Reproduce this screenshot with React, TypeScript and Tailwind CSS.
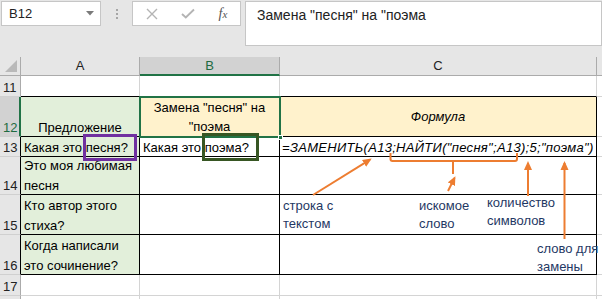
import React from "react";

const ORANGE = "#ed7d31";

function TopBar() {
  return (
    <div className="h-[57px] bg-[#e6e6e6] flex items-start pt-[1px]">
      <div className="ml-[1px] w-[101px] h-[25px] bg-white border border-[#c6c6c6] flex items-center justify-between pl-[7px] pr-[6px]">
        <span className="text-[13px] text-[#222]">B12</span>
        <svg width="8" height="5" viewBox="0 0 8 5">
          <path d="M0 0H8L4 4.5Z" fill="#7a7a7a" />
        </svg>
      </div>
      <div className="w-[31px] h-[25px] flex flex-col items-center justify-center gap-[2px]">
        <div className="w-[2px] h-[2px] bg-[#a6a6a6]" />
        <div className="w-[2px] h-[2px] bg-[#a6a6a6]" />
        <div className="w-[2px] h-[2px] bg-[#a6a6a6]" />
      </div>
      <div className="w-[109px] h-[25px] bg-white border border-[#c6c6c6] flex items-center">
        <div className="w-[37px] flex justify-center">
          <svg width="12" height="12" viewBox="0 0 12 12">
            <path d="M1 1L11 11M11 1L1 11" stroke="#b4b4b4" strokeWidth="1.4" />
          </svg>
        </div>
        <div className="w-[36px] flex justify-center">
          <svg width="14" height="11" viewBox="0 0 14 11">
            <path d="M1 6L4.8 9.5L13 1.5" stroke="#b4b4b4" strokeWidth="1.9" fill="none" />
          </svg>
        </div>
        <div className="w-[34px] flex justify-center">
          <span className="font-['Liberation_Serif',serif] italic text-[14px] text-[#555] leading-none">
            f<span className="text-[11px]">x</span>
          </span>
        </div>
      </div>
      <div className="ml-[4px] w-[360px] h-[45px] bg-white border border-[#c6c6c6] pl-[11px] pt-[4px] text-[14px] leading-[18px] text-[#222] whitespace-nowrap">
        Замена "песня" на "поэма
      </div>
    </div>
  );
}

function Sheet() {
  return (
    <div className="grid grid-cols-[21px_119px_140px_317px_5px] grid-rows-[19px_21px_40px_20px_38px_40px_40px_21px_3px]">
      {/* header row */}
      <div className="bg-[#e6e6e6] border-r border-b border-[#ababab] flex items-end justify-end pr-[3px] pb-[3px]">
        <svg width="12" height="12" viewBox="0 0 12 12">
          <path d="M12 0V12H0Z" fill="#b9b9b9" />
        </svg>
      </div>
      <div className="bg-[#e6e6e6] border-r border-b border-[#ababab] flex items-center justify-center text-[13px] text-[#222]">A</div>
      <div className="bg-[#d2d2d2] border-r border-[#ababab] border-b-2 border-b-[#217346] flex items-center justify-center text-[13px] text-[#1e6b41]">B</div>
      <div className="bg-[#e6e6e6] border-r border-b border-[#ababab] flex items-center justify-center text-[13px] text-[#222]">C</div>
      <div className="bg-[#e6e6e6] border-b border-[#ababab]" />

      {/* row 11 */}
      <div className="bg-[#e6e6e6] border-r border-b border-r-[#ababab] border-b-[#d0d0d0] flex items-end pl-[3px] text-[#222]">
        <span className="leading-[20px] mb-[-2px]">11</span>
      </div>
      <div className="bg-white border-r border-b border-r-[#d4d4d4] border-b-black" />
      <div className="bg-white border-r border-b border-r-[#d4d4d4] border-b-black" />
      <div className="bg-white border-r border-b border-r-[#d4d4d4] border-b-black" />
      <div className="bg-white border-b border-[#d4d4d4]" />

      {/* row 12 */}
      <div className="bg-[#d2d2d2] border-r-2 border-b border-r-[#217346] border-b-[#d0d0d0] flex items-end pl-[3px] text-[#1e6b41]">
        <span className="leading-[20px] mb-[-2px]">12</span>
      </div>
      <div className="bg-[#e2efda] border-r border-b border-black flex items-end justify-center">
        <span className="leading-[20px] mb-[-2px]">Предложение</span>
      </div>
      <div className="bg-[#fff2cc] border-r border-b border-black flex flex-col items-center pt-[1px] leading-[19px] overflow-hidden">
        <span className="whitespace-nowrap">Замена "песня" на</span>
        <span className="whitespace-nowrap">"поэма</span>
      </div>
      <div className="bg-[#fff2cc] border-r border-b border-black flex items-center justify-center">
        <span className="italic leading-[20px]">Формула</span>
      </div>
      <div className="bg-white border-b border-[#d4d4d4]" />

      {/* row 13 */}
      <div className="bg-[#e6e6e6] border-r border-b border-r-black border-b-[#d0d0d0] flex items-end pl-[3px] text-[#222]">
        <span className="leading-[20px] mb-[-2px]">13</span>
      </div>
      <div className="bg-[#e2efda] border-r border-b border-black flex items-end pl-[3px]">
        <span className="leading-[20px] mb-[-2px] whitespace-nowrap">Какая это песня?</span>
      </div>
      <div className="bg-white border-r border-b border-black flex items-end pl-[3px]">
        <span className="leading-[20px] mb-[-2px] whitespace-nowrap">Какая это поэма?</span>
      </div>
      <div className="bg-white border-r border-b border-black flex items-end pl-[2px]">
        <span className="leading-[20px] mb-[-2px] whitespace-nowrap italic tracking-[0.3px]">=ЗАМЕНИТЬ(A13;НАЙТИ("песня";A13);5;"поэма")</span>
      </div>
      <div className="bg-white border-b border-[#d4d4d4]" />

      {/* row 14 */}
      <div className="bg-[#e6e6e6] border-r border-b border-r-black border-b-[#d0d0d0] flex items-end pl-[3px] text-[#222]">
        <span className="leading-[20px] mb-[-2px]">14</span>
      </div>
      <div className="bg-[#e2efda] border-r border-b border-black flex flex-col justify-end pl-[3px] leading-[20px]">
        <span className="whitespace-nowrap">Это моя любимая</span>
        <span className="whitespace-nowrap mb-[-2px]">песня</span>
      </div>
      <div className="bg-white border-r border-b border-black" />
      <div className="bg-white border-r border-b border-black" />
      <div className="bg-white border-b border-[#d4d4d4]" />

      {/* row 15 */}
      <div className="bg-[#e6e6e6] border-r border-b border-r-black border-b-[#d0d0d0] flex items-end pl-[3px] text-[#222]">
        <span className="leading-[20px] mb-[-2px]">15</span>
      </div>
      <div className="bg-[#e2efda] border-r border-b border-black flex flex-col justify-end pl-[3px] leading-[20px]">
        <span className="whitespace-nowrap">Кто автор этого</span>
        <span className="whitespace-nowrap mb-[-2px]">стиха?</span>
      </div>
      <div className="bg-white border-r border-b border-black" />
      <div className="bg-white border-r border-b border-black" />
      <div className="bg-white border-b border-[#d4d4d4]" />

      {/* row 16 */}
      <div className="bg-[#e6e6e6] border-r border-b border-r-black border-b-[#d0d0d0] flex items-end pl-[3px] text-[#222]">
        <span className="leading-[20px] mb-[-2px]">16</span>
      </div>
      <div className="bg-[#e2efda] border-r border-b border-black flex flex-col justify-end pl-[3px] leading-[20px]">
        <span className="whitespace-nowrap">Когда написали</span>
        <span className="whitespace-nowrap mb-[-2px]">это сочинение?</span>
      </div>
      <div className="bg-white border-r border-b border-black" />
      <div className="bg-white border-r border-b border-black" />
      <div className="bg-white border-b border-[#d4d4d4]" />

      {/* row 17 */}
      <div className="bg-[#e6e6e6] border-r border-b border-r-[#ababab] border-b-[#d0d0d0] flex items-end pl-[3px] text-[#222]">
        <span className="leading-[20px] mb-[-2px]">17</span>
      </div>
      <div className="bg-white border-r border-b border-[#d4d4d4]" />
      <div className="bg-white border-r border-b border-[#d4d4d4]" />
      <div className="bg-white border-r border-b border-[#d4d4d4]" />
      <div className="bg-white border-b border-[#d4d4d4]" />

      {/* row 18 partial */}
      <div className="bg-[#e6e6e6] border-r border-[#ababab]" />
      <div className="bg-white border-r border-[#d4d4d4]" />
      <div className="bg-white border-r border-[#d4d4d4]" />
      <div className="bg-white border-r border-[#d4d4d4]" />
      <div className="bg-white" />
    </div>
  );
}

function Arrows() {
  return (
    <svg className="absolute left-0 top-0 pointer-events-none" width="602" height="299" viewBox="0 0 602 299">
      <defs>
        <marker id="ah" markerWidth="9" markerHeight="9" refX="7" refY="4.5" orient="auto" markerUnits="userSpaceOnUse">
          <path d="M0 0.5L9 4.5L0 8.5Z" fill={ORANGE} />
        </marker>
      </defs>
      <line x1="313" y1="195" x2="370" y2="159.6" stroke={ORANGE} strokeWidth="2" markerEnd="url(#ah)" />
      <path d="M390.5 153V159Q390.5 161 392.5 161H515Q517 161 517 159V153" stroke={ORANGE} strokeWidth="2" fill="none" />
      <line x1="453" y1="161" x2="453" y2="174" stroke={ORANGE} strokeWidth="2" />
      <line x1="448" y1="191" x2="454.5" y2="178" stroke={ORANGE} strokeWidth="2" markerEnd="url(#ah)" />
      <line x1="528" y1="196" x2="528" y2="163" stroke={ORANGE} strokeWidth="2" markerEnd="url(#ah)" />
      <line x1="564.5" y1="239" x2="564.5" y2="163" stroke={ORANGE} strokeWidth="2" markerEnd="url(#ah)" />
    </svg>
  );
}

function Notes() {
  return (
    <>
      <div className="absolute left-[283px] top-[197px] leading-[18px] text-[#1f3864] whitespace-nowrap">
        строка с<br />текстом
      </div>
      <div className="absolute left-[419px] top-[197px] leading-[18px] text-[#1f3864] whitespace-nowrap">
        искомое<br />слово
      </div>
      <div className="absolute left-[487px] top-[194px] leading-[18px] text-[#1f3864] whitespace-nowrap">
        количество<br />символов
      </div>
      <div className="absolute left-[537px] top-[240px] leading-[18px] text-[#1f3864] whitespace-nowrap">
        слово для<br />замены
      </div>
    </>
  );
}

export default function App() {
  return (
    <div className="w-[602px] h-[299px] overflow-hidden relative bg-white font-['Liberation_Sans',Arial,sans-serif] text-[13px] text-black">
      <TopBar />
      <Sheet />
      {/* selection B12 */}
      <div className="absolute left-[139px] top-[96px] w-[142px] h-[42px] border-2 border-[#217346] pointer-events-none" />
      <div className="absolute left-[278px] top-[135px] w-[5px] h-[5px] bg-[#217346] border border-white" />
      {/* highlight boxes */}
      <div className="absolute left-[83px] top-[134px] w-[54px] h-[27px] border-[3px] border-[#7030a0]" />
      <div className="absolute left-[202px] top-[133px] w-[57px] h-[28px] border-[3px] border-[#375623]" />
      <Notes />
      <Arrows />
    </div>
  );
}
